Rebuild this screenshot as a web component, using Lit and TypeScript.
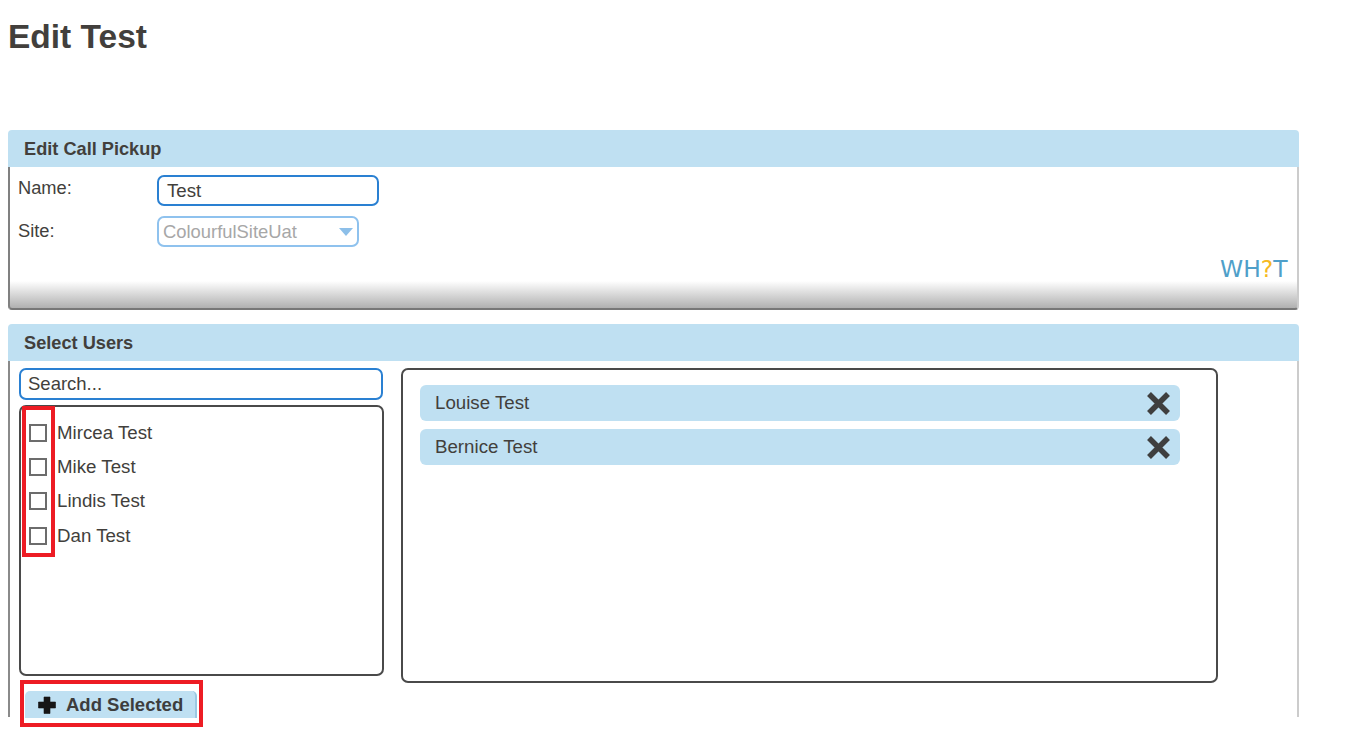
import { LitElement, html, css } from "lit";
import { customElement } from "lit/decorators.js";

@customElement("app-root")
export class AppRoot extends LitElement {
  static styles = css`
    :host { display: block; height: 750px; overflow: hidden; background: #fff; color: #423f3c; font-family: "Liberation Sans", Arial, sans-serif; font-size: 18.7px; box-sizing: border-box; padding: 0 0 0 8px; }
    * { box-sizing: border-box; }
    h1 { margin: 0; height: 130px; padding-top: 17px; font-size: 33.5px; line-height: 40px; font-weight: 700; }
    .panel { width: 1290.5px; }
    .panel + .panel { margin-top: 14px; }
    .head { height: 37px; background: #bfe0f2; border-radius: 4px 4px 0 0; padding: 1px 16px 0; font-size: 18.2px; font-weight: 700; line-height: 37px; }
    .body { border-left: 2px solid #808080; border-right: 2px solid #cccccc; }
    .edit { height: 143px; border-bottom: 2px solid #777; border-radius: 0 0 4px 4px; display: flex; flex-direction: column; background: linear-gradient(#fff 0, #fff 114px, #b0b0b0 141px); }
    .row { display: flex; padding-left: 8px; }
    .row label { width: 139px; line-height: 20px; font-size: 18.3px; }
    .row.name { padding-top: 8px; height: 49px; }
    .row.site { height: 41px; }
    .row.name label { margin-top: 3px; }
    .row.site label { margin-top: 5px; }
    .field { border-radius: 7px; background: #fff; }
    .name .field { width: 222px; height: 31px; border: 2px solid #2a80d2; padding-left: 8px; line-height: 27px; }
    .site .field { width: 202px; height: 31px; border: 2px solid #8fc2ee; padding: 0 4px; line-height: 27px; color: #a7a7a7; display: flex; justify-content: space-between; align-items: center; font-size: 18.4px; }
    .caret { width: 0; height: 0; border-left: 7px solid transparent; border-right: 7px solid transparent; border-top: 8px solid #8dbfe9; }
    .logo { align-self: flex-end; margin-right: 9px; margin-top: -1px; font-family: "DejaVu Sans", sans-serif; font-size: 23.4px; line-height: 26px; color: #4f9fc9; }
    .logo b { font-weight: 400; color: #f6b921; }
    .users { height: 356px; display: flex; gap: 17px; padding: 7px 0 0 9px; border-left-color: #8a8a8a; }
    .left { width: 365px; position: relative; }
    .search { height: 32px; width: 364px; border: 2px solid #2a80d2; border-radius: 7px; padding-left: 7px; line-height: 28px; font-size: 18.5px; }
    .list { margin-top: 5px; height: 271px; border: 2px solid #4a4a4a; border-radius: 7px; padding-top: 8.5px; }
    .item { height: 34.4px; display: flex; align-items: center; padding-left: 8px; gap: 10px; }
    .box { width: 18px; height: 18px; border: 2px solid #6c6c6c; flex: none; }
    .add { margin: 15px 0 0 6px; width: 172px; height: 27px; background: #bfe0f2; border-radius: 5px 5px 0 0; border-right: 2px solid #9cc8e2; display: flex; align-items: center; padding-left: 13px; gap: 10px; font-weight: 700; font-size: 18.5px; color: #3d3d3d; }
    .add svg { flex: none; }
    .right { width: 817px; height: 315px; border: 2px solid #4a4a4a; border-radius: 7px; padding: 15px 36px 0 17px; display: flex; flex-direction: column; gap: 8px; }
    .chip { height: 36px; background: #bfe0f2; border-radius: 6px; display: flex; align-items: center; justify-content: space-between; padding: 0 9px 0 15px; }
    .mark { position: absolute; border: 4px solid #ed1c24; pointer-events: none; }
    .mark.checks { left: 3px; top: 38px; width: 33px; height: 151px; }
    .mark.button { left: 1px; top: 312px; width: 183px; height: 47px; }
  `;

  render() {
    const users = ["Mircea Test", "Mike Test", "Lindis Test", "Dan Test"];
    const chosen = ["Louise Test", "Bernice Test"];
    return html`
      <h1>Edit Test</h1>
      <section class="panel">
        <div class="head">Edit Call Pickup</div>
        <div class="body edit">
          <div class="row name"><label>Name:</label><div class="field">Test</div></div>
          <div class="row site"><label>Site:</label><div class="field">ColourfulSiteUat<span class="caret"></span></div></div>
          <div class="logo">WH<b>?</b>T</div>
        </div>
      </section>
      <section class="panel">
        <div class="head">Select Users</div>
        <div class="body users">
          <div class="left">
            <div class="search">Search...</div>
            <div class="list">
              ${users.map((u) => html`<div class="item"><span class="box"></span>${u}</div>`)}
            </div>
            <div class="add">
              <svg width="18" height="18" viewBox="0 0 18 18"><path d="M6 1h6v5h5.500v6h-5.500v5.500h-6v-5.500h-5.500v-6h5.500z" fill="#161616" stroke="#161616" stroke-width="0.6" stroke-linejoin="round"/></svg>
              Add Selected
            </div>
            <div class="mark checks"></div>
            <div class="mark button"></div>
          </div>
          <div class="right">
            ${chosen.map((c) => html`<div class="chip">${c}
              <svg width="25" height="25" viewBox="0 0 25 25"><path d="M3 3L22 22M22 3L3 22" stroke="#3f3f3f" stroke-width="5.500" fill="none"/></svg>
            </div>`)}
          </div>
        </div>
      </section>
    `;
  }
}
